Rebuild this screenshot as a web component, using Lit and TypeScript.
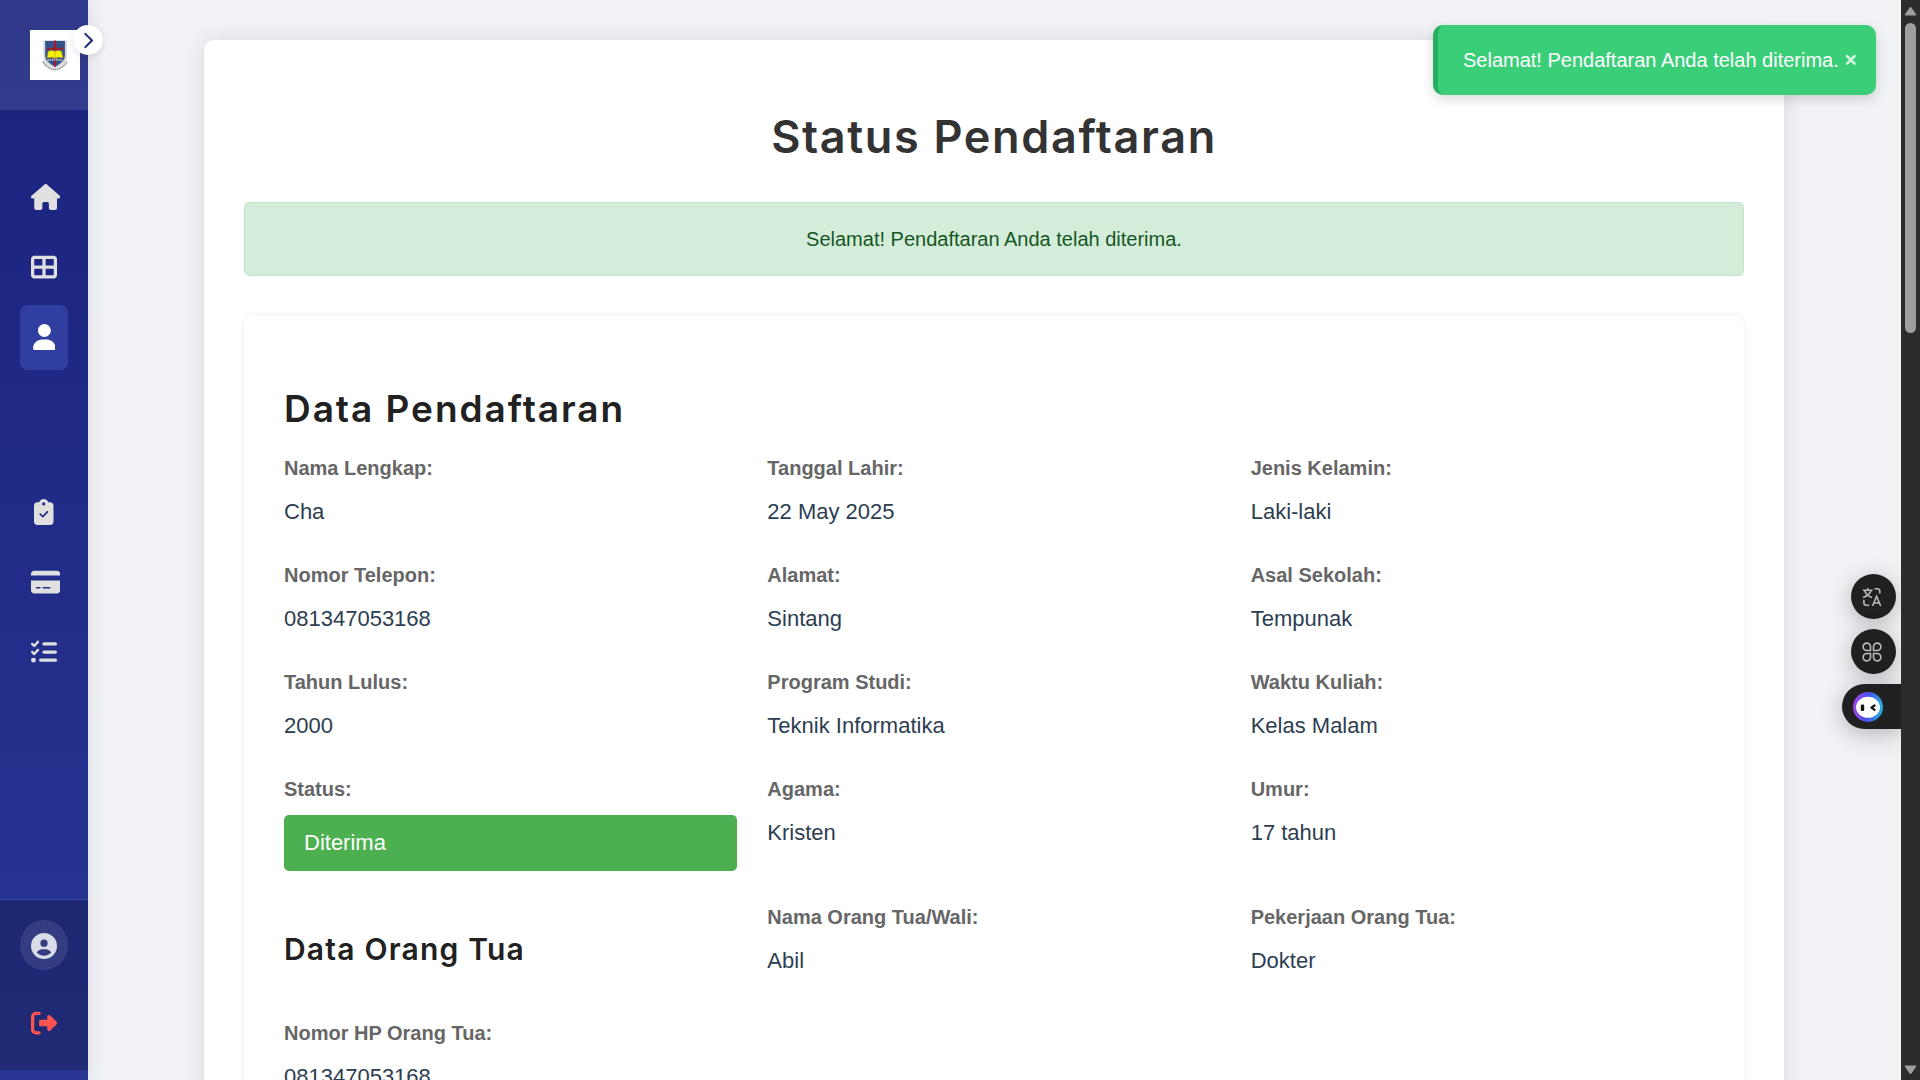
import { LitElement, html, css, svg } from "lit";
import { customElement } from "lit/decorators.js";

type Icon = { w: number; d: string };

const ICONS: Record<string, Icon> = {
  home: { w: 576, d: "M575.8 255.5c0 18-15 32.1-32 32.1h-32l.7 160.2c0 2.7-.2 5.4-.5 8.1V472c0 22.1-17.9 40-40 40H456c-1.1 0-2.2 0-3.3-.1c-1.4 .1-2.8 .1-4.2 .1H416 392c-22.1 0-40-17.9-40-40V448 384c0-17.7-14.3-32-32-32H256c-17.7 0-32 14.3-32 32v64 24c0 22.1-17.9 40-40 40H160 128.1c-1.5 0-3-.1-4.5-.2c-1.2 .1-2.4 .2-3.6 .2H104c-22.1 0-40-17.9-40-40V360c0-.9 0-1.9 .1-2.8V287.6H32c-18 0-32-14-32-32.1c0-9 3-17 10-24L266.4 8c7-7 15-8 22-8s15 2 21 7L564.8 231.5c8 7 12 15 11 24z" },
  grid: { w: 512, d: "M448 96V224H288V96H448zm0 192V416H288V288H448zM224 224H64V96H224V224zM64 288H224V416H64V288zM64 32C28.7 32 0 60.7 0 96V416c0 35.3 28.7 64 64 64H448c35.3 0 64-28.7 64-64V96c0-35.3-28.7-64-64-64H64z" },
  user: { w: 448, d: "M224 256A128 128 0 1 0 224 0a128 128 0 1 0 0 256zm-45.7 48C79.8 304 0 383.8 0 482.3C0 498.7 13.3 512 29.7 512H418.3c16.4 0 29.7-13.3 29.7-29.7C448 383.8 368.2 304 269.7 304H178.3z" },
  clipboard: { w: 384, d: "M192 0c-41.8 0-77.4 26.7-90.5 64H64C28.7 64 0 92.7 0 128V448c0 35.3 28.7 64 64 64H320c35.3 0 64-28.7 64-64V128c0-35.3-28.7-64-64-64H282.5C269.4 26.7 233.8 0 192 0zm0 64a32 32 0 1 1 0 64 32 32 0 1 1 0-64zM275 265L185 361c-6.500 6.500-17 6.500-23.500 0L111 311c-6.500-6.500-6.500-17.500 0-24s17.500-6.500 24 0l37 37L250 241c6.500-6.500 18-6.500 24.500 0s7 17.500 .5 24z" },
  card: { w: 576, d: "M64 32C28.7 32 0 60.7 0 96v32H576V96c0-35.3-28.7-64-64-64H64zM576 224H0V416c0 35.3 28.7 64 64 64H512c35.3 0 64-28.7 64-64V224zM112 352h64c8.8 0 16 7.2 16 16s-7.2 16-16 16H112c-8.8 0-16-7.2-16-16s7.2-16 16-16zm112 16c0-8.8 7.2-16 16-16H368c8.8 0 16 7.2 16 16s-7.2 16-16 16H240c-8.8 0-16-7.2-16-16z" },
  tasks: { w: 512, d: "M152.1 38.2c9.9 8.9 10.7 24 1.8 33.9l-72 80c-4.4 4.9-10.6 7.8-17.2 7.9s-12.9-2.4-17.6-7L7 113C-2.3 103.6-2.3 88.4 7 79s24.6-9.4 33.9 0l22.1 22.1 55.1-61.2c8.9-9.9 24-10.7 33.9-1.8zm0 160c9.9 8.9 10.7 24 1.8 33.9l-72 80c-4.4 4.9-10.6 7.8-17.2 7.9s-12.9-2.4-17.6-7L7 273c-9.4-9.4-9.4-24.6 0-33.9s24.6-9.4 33.9 0l22.1 22.1 55.1-61.2c8.9-9.9 24-10.7 33.9-1.8zM224 96c0-17.7 14.3-32 32-32H480c17.7 0 32 14.3 32 32s-14.3 32-32 32H256c-17.7 0-32-14.3-32-32zm0 160c0-17.7 14.3-32 32-32H480c17.7 0 32 14.3 32 32s-14.3 32-32 32H256c-17.7 0-32-14.3-32-32zM160 416c0-17.7 14.3-32 32-32H480c17.7 0 32 14.3 32 32s-14.3 32-32 32H192c-17.7 0-32-14.3-32-32zM48 368a48 48 0 1 1 0 96 48 48 0 1 1 0-96z" },
  profile: { w: 512, d: "M399 384.2C376.9 345.8 335.4 320 288 320H224c-47.4 0-88.9 25.8-111 64.2c35.2 39.2 86.2 63.8 143 63.8s107.8-24.7 143-63.8zM0 256a256 256 0 1 1 512 0A256 256 0 1 1 0 256zm256 16a72 72 0 1 0 0-144 72 72 0 1 0 0 144z" },
  logout: { w: 512, d: "M377.9 105.9L500.7 228.7c7.2 7.2 11.3 17.1 11.3 27.3s-4.1 20.1-11.3 27.3L377.9 406.1c-6.4 6.4-15 9.9-24 9.9c-18.7 0-33.9-15.2-33.9-33.9l0-62.1-128 0c-17.7 0-32-14.3-32-32l0-64c0-17.7 14.3-32 32-32l128 0 0-62.1c0-18.7 15.2-33.9 33.9-33.9c9 0 17.6 3.6 24 9.9zM160 96L96 96c-17.7 0-32 14.3-32 32l0 256c0 17.7 14.3 32 32 32l64 0c17.7 0 32 14.3 32 32s-14.3 32-32 32l-64 0c-53 0-96-43-96-96L0 128C0 75 43 32 96 32l64 0c17.7 0 32 14.3 32 32s-14.3 32-32 32z" },
};

const icon = (name: string) => {
  const i = ICONS[name];
  return html`<span class="ico"><svg width=${(i.w / 512) * 26} height="26" viewBox="0 0 ${i.w} 512" fill="currentColor">${svg`<path fill-rule="evenodd" d=${i.d}></path>`}</svg></span>`;
};

const FIELDS: [string, string][] = [
  ["Nama Lengkap:", "Cha"], ["Tanggal Lahir:", "22 May 2025"], ["Jenis Kelamin:", "Laki-laki"],
  ["Nomor Telepon:", "081347053168"], ["Alamat:", "Sintang"], ["Asal Sekolah:", "Tempunak"],
  ["Tahun Lulus:", "2000"], ["Program Studi:", "Teknik Informatika"], ["Waktu Kuliah:", "Kelas Malam"],
  ["Status:", "Diterima"], ["Agama:", "Kristen"], ["Umur:", "17 tahun"],
];

const PARENT_FIELDS: [string, string][] = [
  ["Nama Orang Tua/Wali:", "Abil"], ["Pekerjaan Orang Tua:", "Dokter"], ["Nomor HP Orang Tua:", "081347053168"],
];

const field = ([label, value]: [string, string]) => html`
  <div class="field">
    <div class="label">${label}</div>
    <div class=${label === "Status:" ? "value badge" : "value"}>${value}</div>
  </div>`;

@customElement("app-root")
export class AppRoot extends LitElement {
  static styles = css`
    :host { display: block; width: 1920px; height: 1080px; overflow: hidden; position: relative;
      font-family: "Liberation Sans", Arial, sans-serif; background: #f0f2f6; }
    * { box-sizing: border-box; }
    svg { display: block; flex: none; }
    .page { display: flex; height: 1080px; }
    .sidebar { position: relative; z-index: 2; width: 88px; height: 1080px; display: flex; flex-direction: column;
      background: linear-gradient(180deg, #1a237e 0%, #283593 100%); box-shadow: 4px 0 15px rgba(0,0,0,.07); color: #e0e0e0; }
    .brand { height: 110px; padding: 30px 0 0 30px; background: rgba(255,255,255,.1); }
    .logo { width: 50px; height: 50px; background: #fff; }
    .toggle { position: absolute; left: 73px; top: 25px; width: 30px; height: 30px; border-radius: 50%; background: #fff;
      display: flex; align-items: center; justify-content: center; box-shadow: 0 2px 6px rgba(0,0,0,.12); }
    .nav { flex: 1; padding: 55px 20px 0; display: flex; flex-direction: column; gap: 5px; }
    .item { height: 65px; border-radius: 8px; display: flex; align-items: center; padding: 0 0 1px 11px; }
    .item.active { background: #303f9f; color: #fff; }
    .nav .spaced { margin-top: 105px; }
    .ico { width: 26px; height: 26px; display: flex; justify-content: safe center; }
    .foot { height: 171px; margin-bottom: 10px; padding: 20px 20px 0; border-top: 1px solid rgba(255,255,255,.1);
      background: rgba(0,0,0,.2) padding-box; display: flex; flex-direction: column; gap: 20px; }
    .avatar { flex: none; height: 50px; border-radius: 50%; background: rgba(255,255,255,.1); display: flex; align-items: center; padding: 1px 0 0 11px; color: #d9dbe8; }
    .exit { flex: none; height: 65px; display: flex; align-items: center; padding-left: 11px; color: #ff5252; }
    .content { flex: 1; height: 1080px; padding: 40px 117px 0 116px; overflow: hidden; }
    .panel { width: 1580px; height: 1200px; padding: 40px; border-radius: 10px; background: #fff; box-shadow: 0 0 20px rgba(0,0,0,.1); }
    h1, h2, h3 { margin: 0; font-family: Inter, "Open Sans", sans-serif; font-weight: 600; white-space: nowrap; }
    h1 { height: 122px; line-height: 113px; text-align: center; font-size: 45px; color: #333; letter-spacing: 1.65px; }
    .alert { height: 74px; display: flex; align-items: center; justify-content: center; border: 1px solid #c3e6cb; border-radius: 5px;
      background: #d4edda; color: #155724; font-size: 20px; }
    .data { margin-top: 40px; height: 960px; padding: 40px; border-radius: 10px; background: #fff; box-shadow: 0 0 8px rgba(0,0,0,.07); }
    h2 { height: 96px; line-height: 106px; font-size: 37px; color: #212121; letter-spacing: 1.95px; }
    h3 { font-size: 30px; color: #212121; height: 86px; line-height: 96px; letter-spacing: 1.2px; }
    .fields { display: grid; grid-template-columns: repeat(3, 1fr); column-gap: 30px; row-gap: 30px; }
    .field { display: flex; flex-direction: column; gap: 10px; }
    .label { line-height: 32px; font-size: 20px; font-weight: 700; color: #666; }
    .value { line-height: 35px; font-size: 22px; color: #2c3e50; }
    .badge { padding: 10px 20px 11px; border-radius: 5px; background: #4caf50; color: #fff; }
    .toast { position: absolute; z-index: 3; left: 1433px; top: 25px; width: 443px; height: 70px; border-radius: 10px; border-left: 5px solid #27ae60;
      background: #3ace78; color: #fff; font-size: 20px; display: flex; align-items: center; padding-left: 25px; gap: 6px; box-shadow: 0 4px 12px rgba(0,0,0,.15); white-space: nowrap; }
    .float { position: absolute; z-index: 3; width: 45px; height: 45px; left: 1851px; border-radius: 50%; background: #202020;
      display: flex; align-items: center; justify-content: center; padding-right: 3px; box-shadow: 0 5px 22px rgba(0,0,0,.25); }
    .translate { top: 574px; }
    .apps { top: 629px; }
    .bot { top: 684px; left: 1842px; width: 59px; border-radius: 23px 0 0 23px; justify-content: flex-start; padding-left: 11px; }
    .scroll { position: absolute; z-index: 4; left: 1901px; top: 0; width: 19px; height: 1080px; background: #2c2c2c;
      display: flex; flex-direction: column; align-items: center; padding: 6px 0 5px; }
    .thumb { width: 11px; height: 310px; margin-top: 7px; margin-bottom: auto; border-radius: 6px; background: #9f9f9f; }
  `;

  render() {
    return html`
      <div class="page">
        <aside class="sidebar">
          <div class="brand">
            <div class="logo">
              <svg width="50" height="50" viewBox="0 0 50 50">
                <path d="M13.4 10.2h23.4V27q0 6.5-11.7 11.2Q13.4 33.5 13.4 27z" fill="#d4d5d7"></path>
                <path d="M15.2 11h19.7v14.5q0 6.3-9.8 11.2-9.9-4.9-9.9-11.2z" fill="#34538a"></path>
                <path d="M25 10.5v26M17 18.8h16.5" stroke="#a31d2c" stroke-width="2.1"></path>
                <path d="M18.2 21.2q4-1.6 6.8 0 2.8-1.6 6.6 0L33 28q-4.500-1.300-8 .2-3.500-1.500-8-.2z" fill="#f8ef09" stroke="#8f8c2c" stroke-width=".6"></path>
                <path d="M25 21.500v6.500" stroke="#a9a319" stroke-width=".6"></path>
                <path d="M17.500 30.200q7.500-1 15 0" fill="none" stroke="#b9bdc4" stroke-width="1.800" stroke-dasharray="1.500 .6"></path>
                <path d="M12.800 31.300q5 7.700 12.200 8.300 7.200-.6 12.200-8.300" fill="none" stroke="#dcdcdc" stroke-width="3"></path>
                <path d="M12.800 31.300q5 7.700 12.200 8.300 7.200-.6 12.200-8.300" fill="none" stroke="#8c8c8c" stroke-width="1.300" stroke-dasharray="1 .9"></path>
              </svg>
            </div>
          </div>
          <div class="toggle">
            <svg width="30" height="30" viewBox="0 0 30 30" fill="none" stroke="#1a237e" stroke-width="2" stroke-linecap="round" stroke-linejoin="round"><path d="M12.300 8.900l6.700 6.600-6.700 6.600"></path></svg>
          </div>
          <nav class="nav">
            <div class="item">${icon("home")}</div>
            <div class="item">${icon("grid")}</div>
            <div class="item active">${icon("user")}</div>
            <div class="item spaced">${icon("clipboard")}</div>
            <div class="item">${icon("card")}</div>
            <div class="item">${icon("tasks")}</div>
          </nav>
          <div class="foot">
            <div class="avatar">${icon("profile")}</div>
            <div class="exit">${icon("logout")}</div>
          </div>
        </aside>
        <main class="content">
          <section class="panel">
            <h1>Status Pendaftaran</h1>
            <div class="alert">Selamat! Pendaftaran Anda telah diterima.</div>
            <div class="data">
              <h2>Data Pendaftaran</h2>
              <div class="fields">
                ${FIELDS.map(field)}
                <h3>Data Orang Tua</h3>
                ${PARENT_FIELDS.map(field)}
              </div>
            </div>
          </section>
        </main>
      </div>
      <div class="toast">
        <span>Selamat! Pendaftaran Anda telah diterima.</span>
        <svg width="12" height="12" viewBox="0 0 12 12" stroke="#d3f4e1" stroke-width="2.500" stroke-linecap="round"><path d="M2 2l7.600 7.600M9.600 2L2 9.600"></path></svg>
      </div>
      <div class="float translate">
        <svg width="20" height="20" viewBox="0 0 20 20" fill="none" stroke="#b9b9bd" stroke-width="1.600">
          <path d="M1 3.200h9.500M5.700 1v2.200M2.600 3.400q1.600 5 7.400 7M9 3.400q-1.600 5-8 7"></path>
          <path d="M12.500 1.700h2.800q2.500 0 2.500 2.500v2.300M1.900 12.700v3q0 2.500 2.500 2.500h2.800"></path>
          <path d="M10.500 19l4.100-9.600L18.700 19M12 16h5.300"></path>
        </svg>
      </div>
      <div class="float apps">
        <svg width="20" height="20" viewBox="0 0 20 20" fill="none" stroke="#b9b9bd" stroke-width="1.600">
          <path d="M8.500 8.500H5A3.700 3.700 0 1 1 8.500 5zM11.500 8.500V5a3.700 3.700 0 1 1 3.500 3.500zM8.500 11.500V15A3.700 3.700 0 1 1 5 11.500zM11.500 11.500H15a3.700 3.700 0 1 1-3.500 3.500z"></path>
        </svg>
      </div>
      <div class="float bot">
        <svg width="30" height="30" viewBox="0 0 30 30">
          <defs>
            <linearGradient id="ring" x1="0" y1=".7" x2="1" y2=".8"><stop offset="0" stop-color="#a044e8"></stop><stop offset=".45" stop-color="#4a50ee"></stop><stop offset="1" stop-color="#22b8d8"></stop></linearGradient>
          </defs>
          <circle cx="15" cy="15" r="15" fill="url(#ring)"></circle>
          <ellipse cx="15" cy="15.300" rx="12" ry="10.500" fill="#fff"></ellipse>
          <rect x="7.800" y="12.600" width="3.400" height="6.400" rx="1.200" fill="#151515"></rect>
          <path d="M21.600 13.500l-3.200 2.200 3.200 2.200" fill="none" stroke="#151515" stroke-width="2.200" stroke-linecap="round" stroke-linejoin="round"></path>
        </svg>
      </div>
      <div class="scroll">
        <svg width="13" height="10" viewBox="0 0 13 10"><path d="M6.500 1L12 9H1z" fill="#9f9f9f" stroke="#9f9f9f" stroke-linejoin="round"></path></svg>
        <div class="thumb"></div>
        <svg width="13" height="10" viewBox="0 0 13 10"><path d="M6.500 9L12 1H1z" fill="#9f9f9f" stroke="#9f9f9f" stroke-linejoin="round"></path></svg>
      </div>
    `;
  }
}
